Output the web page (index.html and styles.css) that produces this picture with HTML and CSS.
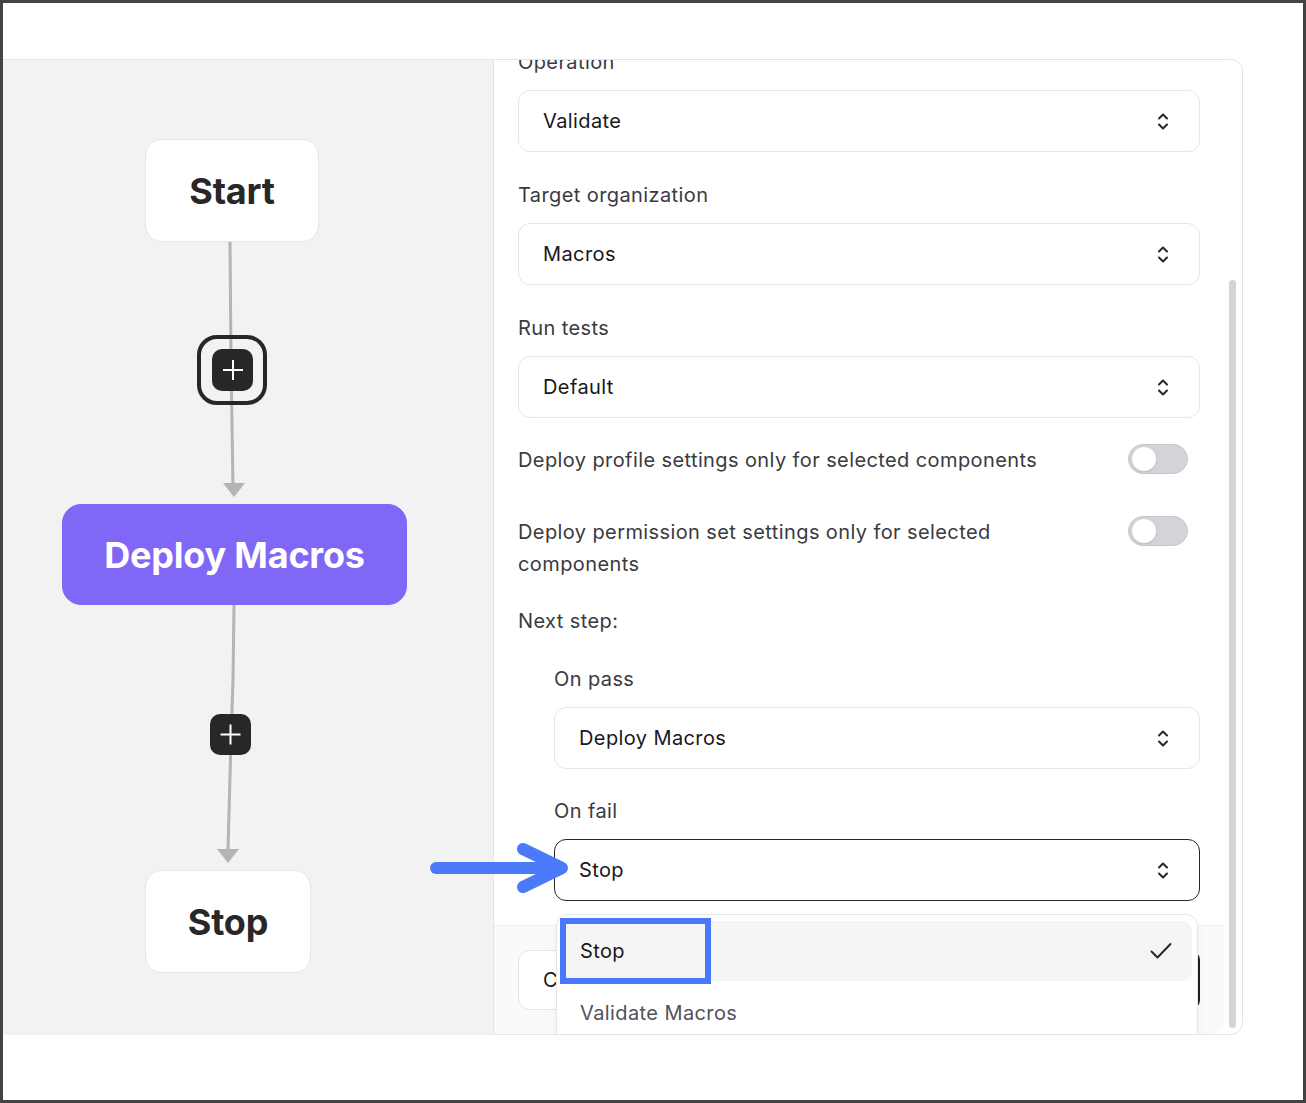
FILE: index.html
```html
<!DOCTYPE html>
<html lang="en">
<head>
<meta charset="utf-8">
<title>Flow editor</title>
<link rel="stylesheet" href="styles.css">
</head>
<body>
<div class="frame">
  <header class="topbar"></header>
  <main class="main">
    <section class="canvas">
      <svg class="edges" width="490" height="975" viewBox="0 0 490 975">
        <path d="M227 182 L228 300 L230 428" class="edge"/>
        <polygon points="220,423 242,423 231,437" class="edge-head"/>
        <path d="M231 545 L230 620 L228 680 L225 790" class="edge"/>
        <polygon points="214,789 236,789 225,803" class="edge-head"/>
        <rect x="196" y="277" width="66" height="66" rx="18" class="ring"/>
        <rect x="209" y="289" width="41" height="42" rx="10" class="plus-bg"/>
        <path d="M220 310 H240 M230 300 V320" class="plus"/>
        <rect x="207" y="654" width="41" height="41" rx="10" class="plus-bg"/>
        <path d="M217.5 674.5 H237.5 M227.5 664.5 V684.5" class="plus"/>
      </svg>
      <div class="node node-start">Start</div>
      <div class="node node-deploy">Deploy Macros</div>
      <div class="node node-stop">Stop</div>
    </section>
    <aside class="panel">
      <div class="panel-main">
        <div class="panel-scroll">
          <div class="form">
            <div class="field">
              <div class="label">Operation</div>
              <div class="select"><span>Validate</span><svg class="chev" width="12" height="19" viewBox="0 0 12 19"><path d="M2 6.5 L6 2.5 L10 6.5 M2 12.5 L6 16.5 L10 12.5"/></svg></div>
            </div>
            <div class="field">
              <div class="label">Target organization</div>
              <div class="select"><span>Macros</span><svg class="chev" width="12" height="19" viewBox="0 0 12 19"><path d="M2 6.5 L6 2.5 L10 6.5 M2 12.5 L6 16.5 L10 12.5"/></svg></div>
            </div>
            <div class="field">
              <div class="label">Run tests</div>
              <div class="select"><span>Default</span><svg class="chev" width="12" height="19" viewBox="0 0 12 19"><path d="M2 6.5 L6 2.5 L10 6.5 M2 12.5 L6 16.5 L10 12.5"/></svg></div>
            </div>
            <div class="toggle-row first">
              <div class="toggle-text">Deploy profile settings only for selected components</div>
              <div class="toggle"><span class="knob"></span></div>
            </div>
            <div class="toggle-row second">
              <div class="toggle-text">Deploy permission set settings only for selected components</div>
              <div class="toggle"><span class="knob"></span></div>
            </div>
            <div class="next-title">Next step:</div>
            <div class="sub">
              <div class="sub-field">
                <div class="label">On pass</div>
                <div class="select"><span>Deploy Macros</span><svg class="chev" width="12" height="19" viewBox="0 0 12 19"><path d="M2 6.5 L6 2.5 L10 6.5 M2 12.5 L6 16.5 L10 12.5"/></svg></div>
              </div>
              <div class="sub-field">
                <div class="label">On fail</div>
                <div class="select active"><span>Stop</span><svg class="chev" width="12" height="19" viewBox="0 0 12 19"><path d="M2 6.5 L6 2.5 L10 6.5 M2 12.5 L6 16.5 L10 12.5"/></svg></div>
              </div>
            </div>
          </div>
        </div>
        <footer class="panel-footer">
          <button class="btn btn-cancel">Cancel</button>
          <button class="btn btn-save">Save</button>
        </footer>
      </div>
      <div class="gutter"><div class="thumb"></div></div>
      <div class="dropdown">
        <div class="option selected"><span>Stop</span><svg class="check" width="24" height="20" viewBox="0 0 24 20"><path d="M2.5 10.5 L8.5 16.5 L21.5 3"/></svg></div>
        <div class="option muted"><span>Validate Macros</span></div>
      </div>
    </aside>
    <div class="rightspace"></div>
  </main>
  <div class="bottomspace"></div>

  <svg class="anno-arrow" width="160" height="70" viewBox="0 0 160 70">
    <path d="M16 33 L135 33"/>
    <path d="M103 14 L142 33 L103 52"/>
  </svg>
  <div class="anno-box"></div>
</div>
</body>
</html>
```

FILE: styles.css
```css
* { box-sizing: border-box; }
html, body { margin: 0; padding: 0; background: #fff; }
body { font-family: "Inter", "Noto Sans", sans-serif; }

.frame {
  width: 1306px;
  height: 1103px;
  border: 3px solid #434343;
  background: #fff;
  display: flex;
  flex-direction: column;
  position: relative;
  overflow: hidden;
}

.topbar { height: 56px; flex: none; }

.main { display: flex; height: 976px; flex: none; }

.canvas {
  width: 490px;
  flex: none;
  background: #f2f2f2;
  border-top: 1px solid #e4e4e4;
  position: relative;
}

.edges { position: absolute; left: 0; top: 0; }
.edge { fill: none; stroke: #b3b3b8; stroke-width: 3; }
.edge-head { fill: #b3b3b8; }
.ring { fill: none; stroke: #27272a; stroke-width: 4; }
.plus-bg { fill: #27272a; }
.plus { stroke: #fff; stroke-width: 2; fill: none; }

.node {
  position: absolute;
  display: flex;
  align-items: center;
  justify-content: center;
  font-weight: 700;
  font-size: 36px;
  letter-spacing: -0.2px;
  color: #27272a;
  background: #fff;
  border: 1px solid #e6e6e6;
  border-radius: 17px;
}
.node-start { left: 142px; top: 79px; width: 174px; height: 103px; }
.node-deploy { left: 59px; top: 444px; width: 345px; height: 101px; background: #8167f5; border-color: #8167f5; color: #fff; border-radius: 19px; }
.node-stop { left: 142px; top: 810px; width: 166px; height: 103px; }

.panel {
  width: 750px;
  flex: none;
  border: 1px solid #e4e4e4;
  border-radius: 0 12px 12px 0;
  display: flex;
  position: relative;
  overflow: hidden;
  background: #fff;
  letter-spacing: 0.4px;
}

.panel-main { width: 730px; flex: none; display: flex; flex-direction: column; }
.panel-scroll { flex: 1; overflow: hidden; }

.form { padding: 0 24px; margin-top: -12px; }

.field { margin-bottom: 29px; }
.label { font-size: 20px; line-height: 28px; color: #3a3a41; margin-bottom: 14px; }

.select {
  height: 62px;
  border: 1px solid #e6e6e6;
  border-radius: 12px;
  display: flex;
  align-items: center;
  justify-content: space-between;
  padding: 0 30px 0 24px;
  font-size: 20px;
  color: #18181b;
  background: #fff;
}
.select.active { border-color: #27272a; }
.chev path { fill: none; stroke: #27272a; stroke-width: 2; stroke-linecap: round; stroke-linejoin: round; }

.toggle-row { display: flex; justify-content: space-between; align-items: flex-start; }
.toggle-row.first { margin-top: -3px; }
.toggle-row.second { margin-top: 40px; }
.toggle-text { width: 570px; font-size: 20px; line-height: 32px; color: #3a3a41; }
.toggle {
  width: 60px;
  height: 30px;
  margin-right: 12px;
  border-radius: 15px;
  background: #d4d4d8;
  border: 1px solid #c6c6ca;
  position: relative;
  flex: none;
}
.knob {
  position: absolute;
  left: 3px;
  top: 2px;
  width: 24px;
  height: 24px;
  border-radius: 50%;
  background: #fff;
  box-shadow: 0 1px 2px rgba(0,0,0,0.12);
}

.next-title { margin-top: 25px; font-size: 20px; line-height: 32px; color: #3a3a41; }
.sub { padding-left: 36px; }
.sub-field { margin-top: 28px; }

.panel-footer {
  height: 109px;
  flex: none;
  border-top: 1px solid #ececec;
  background: #fafafa;
  border-bottom-right-radius: 12px;
  padding: 24px 24px 0 24px;
  display: flex;
  justify-content: space-between;
  align-items: flex-start;
}
.btn {
  height: 60px;
  border-radius: 12px;
  font-family: inherit;
  font-size: 20px;
  letter-spacing: 0.4px;
  padding: 0 24px;
}
.btn-cancel { background: #fff; border: 1px solid #e6e6e6; color: #18181b; }
.btn-save { background: #1f1f23; border: 1px solid #1f1f23; color: #fff; border-radius: 10px; width: 110px; }

.gutter { width: 18px; flex: none; padding-top: 220px; padding-left: 5px; }
.thumb { width: 7px; height: 748px; border-radius: 4px; background: #d4d4d4; }

.dropdown {
  position: absolute;
  left: 62px;
  top: 854px;
  width: 642px;
  height: 220px;
  background: #fff;
  border: 1px solid #e6e6e6;
  border-radius: 12px;
  padding: 6px 5px;
  box-shadow: 0 4px 12px rgba(0,0,0,0.04);
}
.option {
  height: 60px;
  border-radius: 10px;
  display: flex;
  align-items: center;
  justify-content: space-between;
  padding: 0 19px 0 18px;
  font-size: 20px;
  color: #18181b;
}
.option.selected { background: #f5f5f5; }
.option.muted { color: #52525b; margin-top: 2px; }
.check path { fill: none; stroke: #27272a; stroke-width: 2; stroke-linecap: round; stroke-linejoin: round; }

.rightspace { flex: 1; }
.bottomspace { flex: 1; }

.anno-arrow { position: absolute; left: 417px; top: 832px; }
.anno-arrow path { fill: none; stroke: #4a7afa; stroke-width: 12; stroke-linecap: round; stroke-linejoin: round; }
.anno-box {
  position: absolute;
  left: 557px;
  top: 915px;
  width: 151px;
  height: 66px;
  border: 6px solid #4a78fa;
}
```
